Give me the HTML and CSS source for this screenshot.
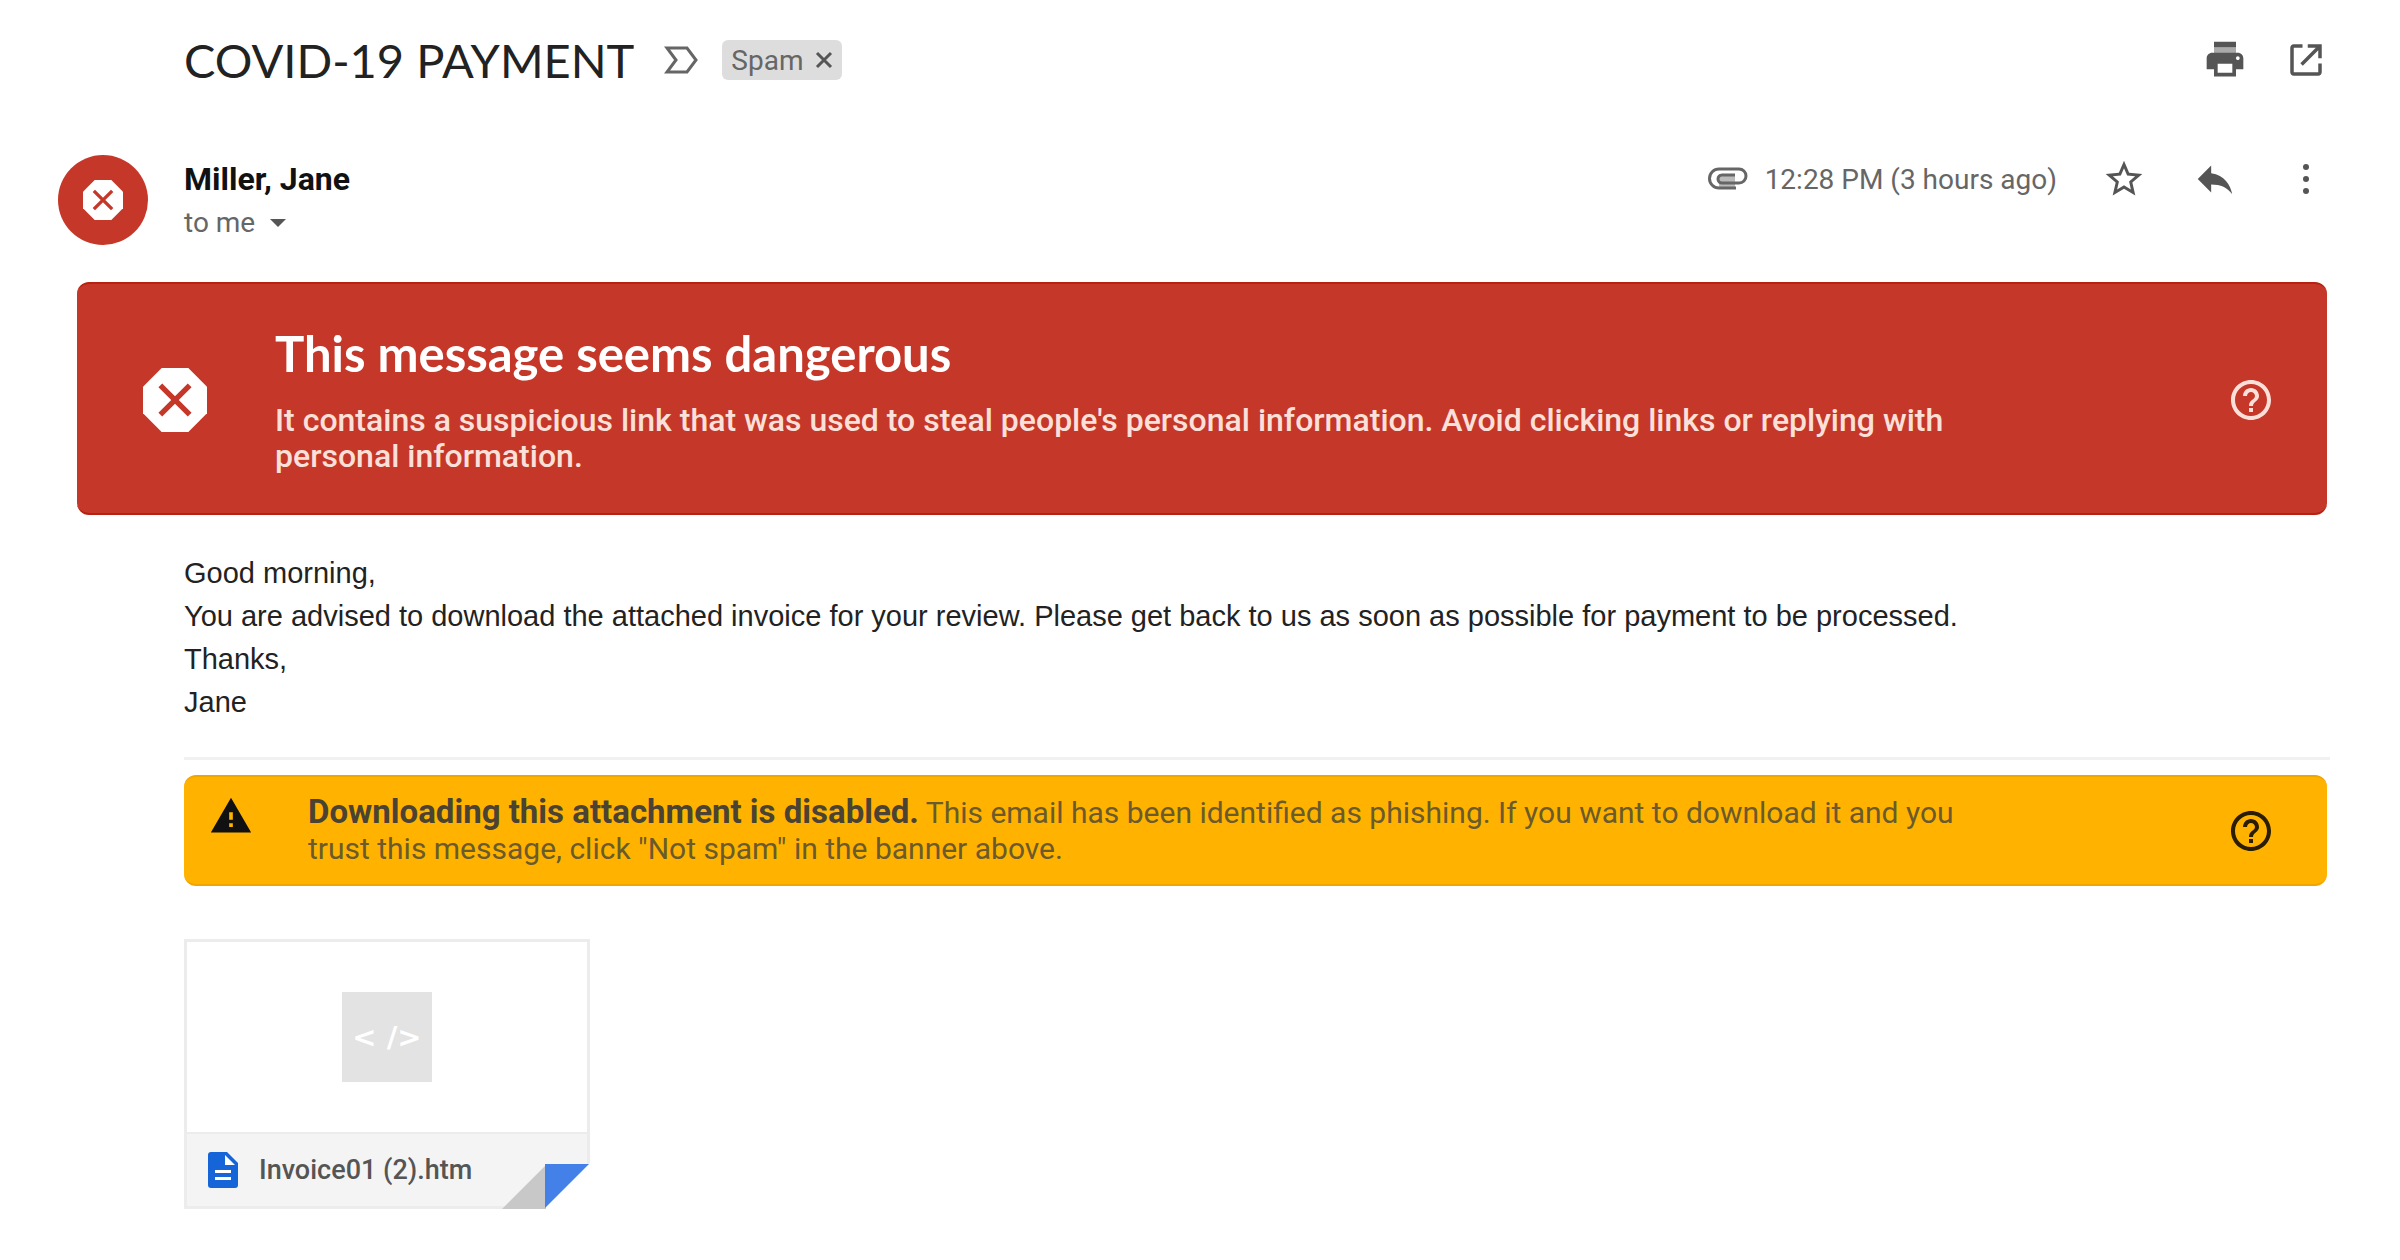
FILE: index.html
```
<!DOCTYPE html>
<html lang="en">
<head>
    <meta charset="utf-8">
    <title>COVID-19 PAYMENT</title>
    <link rel="stylesheet" href="styles.css">
</head>
<body>
<svg class="sprite" aria-hidden="true">
    <symbol id="help" viewBox="0 0 24 24">
        <path d="M11 18h2v-2h-2v2zm1-16C6.480 2 2 6.480 2 12s4.480 10 10 10 10-4.480 10-10S17.520 2 12 2zm0 18c-4.410 0-8-3.590-8-8s3.590-8 8-8 8 3.590 8 8-3.590 8-8 8zm0-14c-2.210 0-4 1.790-4 4h2c0-1.100.9-2 2-2s2 .9 2 2c0 2-3 1.750-3 5h2c0-2.250 3-2.500 3-5 0-2.210-1.790-4-4-4z"/>
    </symbol>
    <symbol id="danger" viewBox="0 0 24 24">
        <path fill="#fff" d="M7 0h10l7 7v10l-7 7H7l-7-7V7z"/>
        <path fill="none" stroke="#c53728" stroke-width="2" d="M6.500 6.500l11 11M17.500 6.500l-11 11"/>
    </symbol>
</svg>

<div class="subject">
    <h1>COVID-19 PAYMENT</h1>
    <button class="icon-button important" aria-label="Mark as important">
        <svg width="34" height="28" viewBox="0 0 34 28"><path fill="none" stroke="#666" stroke-width="3" d="M3 2h20l9 12-9 12H3l9-12z"/></svg>
    </button>
    <button class="label">Spam
        <svg width="18" height="18" viewBox="0 0 18 18"><path stroke="#555" stroke-width="3" d="M2 2l14 14M16 2L2 16"/></svg>
    </button>
    <div class="page-actions">
        <button class="icon-button" aria-label="Print">
            <svg width="44" height="44" viewBox="0 0 24 24"><path fill="#aaa" d="M6 5h12v4H6z"/><path fill="#555" d="M19 8H5c-1.660 0-3 1.340-3 3v6h4v4h12v-4h4v-6c0-1.660-1.340-3-3-3zm-3 11H8v-5h8v5zm3-7c-.55 0-1-.45-1-1s.45-1 1-1 1 .45 1 1-.45 1-1 1zM18 2H6v3h12z"/></svg>
        </button>
        <button class="icon-button" aria-label="Open in new window">
            <svg width="42" height="42" viewBox="0 0 24 24"><path fill="#555" d="M19 19H5V5h5V3H5c-1.110 0-2 .9-2 2v14c0 1.100.89 2 2 2h14c1.100 0 2-.9 2-2v-5h-2v5zM13 3v2h4.590l-8.830 8.830 1.410 1.410L19 6.410V11h2V3h-8z"/></svg>
        </button>
    </div>
</div>

<div class="header">
    <div class="avatar"><svg width="40" height="40"><use href="#danger"/></svg></div>
    <div class="sender">
        <div class="name">Miller, Jane</div>
        <button class="recipient">to me
            <svg width="16" height="8" viewBox="0 0 16 8"><path fill="#555" d="M0 0h16L8 8z"/></svg>
        </button>
    </div>
    <div class="message-actions">
        <svg class="clip" width="41" height="24" viewBox="0 0 41 24"><path fill="#bbb" d="M12 7h16v14H12z"/><path fill="none" stroke="#666" stroke-width="3" d="M29 21H12a9 9 0 0 1 0-19h20a7 7 0 0 1 0 14H15a4 4 0 0 1 0-8h13"/></svg>
        <span class="time">12:28 PM (3 hours ago)</span>
        <button class="icon-button" aria-label="Star">
            <svg width="44" height="44" viewBox="0 0 24 24"><path fill="#555" d="M22 9.240l-7.190-.62L12 2 9.190 8.630 2 9.240l5.460 4.730L5.820 21 12 17.270 18.180 21l-1.630-7.030L22 9.240zM12 15.400l-3.760 2.270 1-4.280-3.320-2.880 4.380-.38L12 6.100l1.710 4.040 4.380.38-3.320 2.880 1 4.280L12 15.400z"/></svg>
        </button>
        <button class="icon-button" aria-label="Reply">
            <svg width="46" height="46" viewBox="0 0 24 24"><path fill="#555" d="M10 9V5l-7 7 7 7v-4.100c5 0 8.500 1.600 11 5.100-1-5-4-10-11-11z"/></svg>
        </button>
        <button class="icon-button" aria-label="More">
            <svg width="8" height="32" viewBox="0 0 8 32"><g fill="#555"><circle cx="4" cy="4" r="3"/><circle cx="4" cy="16" r="3"/><circle cx="4" cy="28" r="3"/></g></svg>
        </button>
    </div>
</div>

<div class="danger-banner">
    <svg class="danger-icon" width="64" height="64"><use href="#danger"/></svg>
    <div class="banner-text">
        <h2>This message seems dangerous</h2>
        <p>It contains a suspicious link that was used to steal people's personal information. Avoid clicking links or replying with<br>personal information.</p>
    </div>
    <button class="icon-button help" aria-label="Help"><svg width="48" height="48"><use href="#help"/></svg></button>
</div>

<div class="content">
    <p>Good morning,</p>
    <p>You are advised to download the attached invoice for your review. Please get back to us as soon as possible for payment to be processed.</p>
    <p>Thanks,</p>
    <p>Jane</p>
</div>

<div class="attachments">
    <div class="warning-banner">
        <svg class="warning-icon" width="44" height="44" viewBox="0 0 24 24"><path d="M1 21h22L12 2 1 21zm12-3h-2v-2h2v2zm0-4h-2v-4h2v4z"/></svg>
        <p class="banner-text"><b>Downloading this attachment is disabled.</b> This email has been identified as phishing. If you want to download it and you<br>trust this message, click "Not spam" in the banner above.</p>
        <button class="icon-button help" aria-label="Help"><svg width="48" height="48"><use href="#help"/></svg></button>
    </div>
    <a class="file" href="#">
        <div class="preview"><span class="filetype">&lt; /&gt;</span></div>
        <div class="filename">
            <svg width="30" height="36" viewBox="0 0 30 36"><path fill="#1565d8" d="M3 0h16l11 11v22a3 3 0 0 1-3 3H3a3 3 0 0 1-3-3V3a3 3 0 0 1 3-3z"/><path fill="#fff" d="M17 3v10h10zM7 18h16v3H7zM7 25h16v3H7z"/></svg>
            <span>Invoice01 (2).htm</span>
        </div>
        <svg class="fold" width="88" height="46" viewBox="0 0 88 46"><path fill="#fff" d="M88 0v46H42z"/><path fill="#c8c8c8" d="M0 46L44 2v44z"/><path fill="#4380e8" d="M43 1h44L43 45z"/></svg>
    </a>
</div>
</body>
</html>
```
FILE: styles.css
```
* { box-sizing: border-box; }
body { margin: 0; padding: 36px 70px 50px 58px; background: #fff; color: #222; font-family: Roboto, "Liberation Sans", sans-serif; font-size: 28px; }
h1, h2, p { margin: 0; }
button { border: 0; padding: 0; background: none; color: inherit; font: inherit; cursor: pointer; }
svg { display: block; flex: none; }
.sprite { position: absolute; width: 0; height: 0; }
.icon-button { display: flex; align-items: center; justify-content: center; width: 48px; height: 48px; flex: none; }

.subject { display: flex; align-items: center; padding-left: 126px; height: 48px; }
.subject h1 { font-family: Lato, sans-serif; font-size: 47px; font-weight: 400; line-height: 48px; }
.important { margin: 0 17px 0 23px; }
.label { display: flex; align-items: center; gap: 12px; height: 40px; padding: 0 9px; border-radius: 6px; background: #ddd; color: #666; }
.page-actions { display: flex; gap: 33px; margin-left: auto; }

.header { display: flex; align-items: flex-start; margin-top: 71px; }
.avatar { display: flex; align-items: center; justify-content: center; width: 90px; height: 90px; border-radius: 50%; background: #c53728; }
.sender { margin-left: 36px; padding-top: 2px; line-height: 44px; }
.name { color: #111; font-size: 32px; font-weight: bold; }
.recipient { display: flex; align-items: center; gap: 15px; color: #666; }
.message-actions { display: flex; align-items: center; gap: 43px; margin-left: auto; color: #666; }
.clip { margin-right: -26px; }

.banner-text { flex: 1; line-height: 36px; }
.danger-banner { display: flex; align-items: center; margin: 37px 3px 0 19px; padding: 41px 52px 39px 66px; border: 2px solid #b8200f; border-width: 2px 0; border-radius: 12px; background: #c53728; color: #fbe0da; font-size: 32px; font-weight: 500; }
.danger-icon { margin-right: 68px; }
.danger-banner h2 { margin-bottom: 21px; color: #fff; font-family: Lato, sans-serif; font-size: 49px; line-height: 56px; }
.help { fill: currentColor; }

.content { margin-left: 126px; padding: 37px 0 33px; font-family: "Liberation Sans", Arial, sans-serif; font-size: 29px; line-height: 43px; }

.attachments { margin-left: 126px; border-top: 3px solid #f1f1f4; }
.warning-banner { display: flex; align-items: center; margin: 15px 3px 0 0; padding: 17px 52px 17px 25px; border: 2px solid #eea600; border-width: 2px 0; border-radius: 12px; background: #ffb300; color: #6b5a2c; font-size: 30px; }
.warning-banner b { color: #4a4334; font-size: 33px; }
.warning-icon { align-self: flex-start; margin-right: 55px; fill: #111; }
.warning-banner .help { color: #2a1d00; }

.file { display: block; position: relative; width: 406px; margin-top: 53px; border: 3px solid #ececec; color: #555; text-decoration: none; }
.preview { display: flex; align-items: center; justify-content: center; height: 190px; }
.filetype { width: 90px; height: 90px; background: #e3e3e3; color: #fff; font-family: "DejaVu Sans", sans-serif; font-size: 29px; font-weight: bold; line-height: 90px; text-align: center; }
.filename { display: flex; align-items: center; gap: 21px; height: 74px; padding-left: 21px; border-top: 2px solid #ececec; background: #f4f4f4; font-size: 27px; font-weight: 500; }
.fold { position: absolute; right: -3px; bottom: -3px; }
```
